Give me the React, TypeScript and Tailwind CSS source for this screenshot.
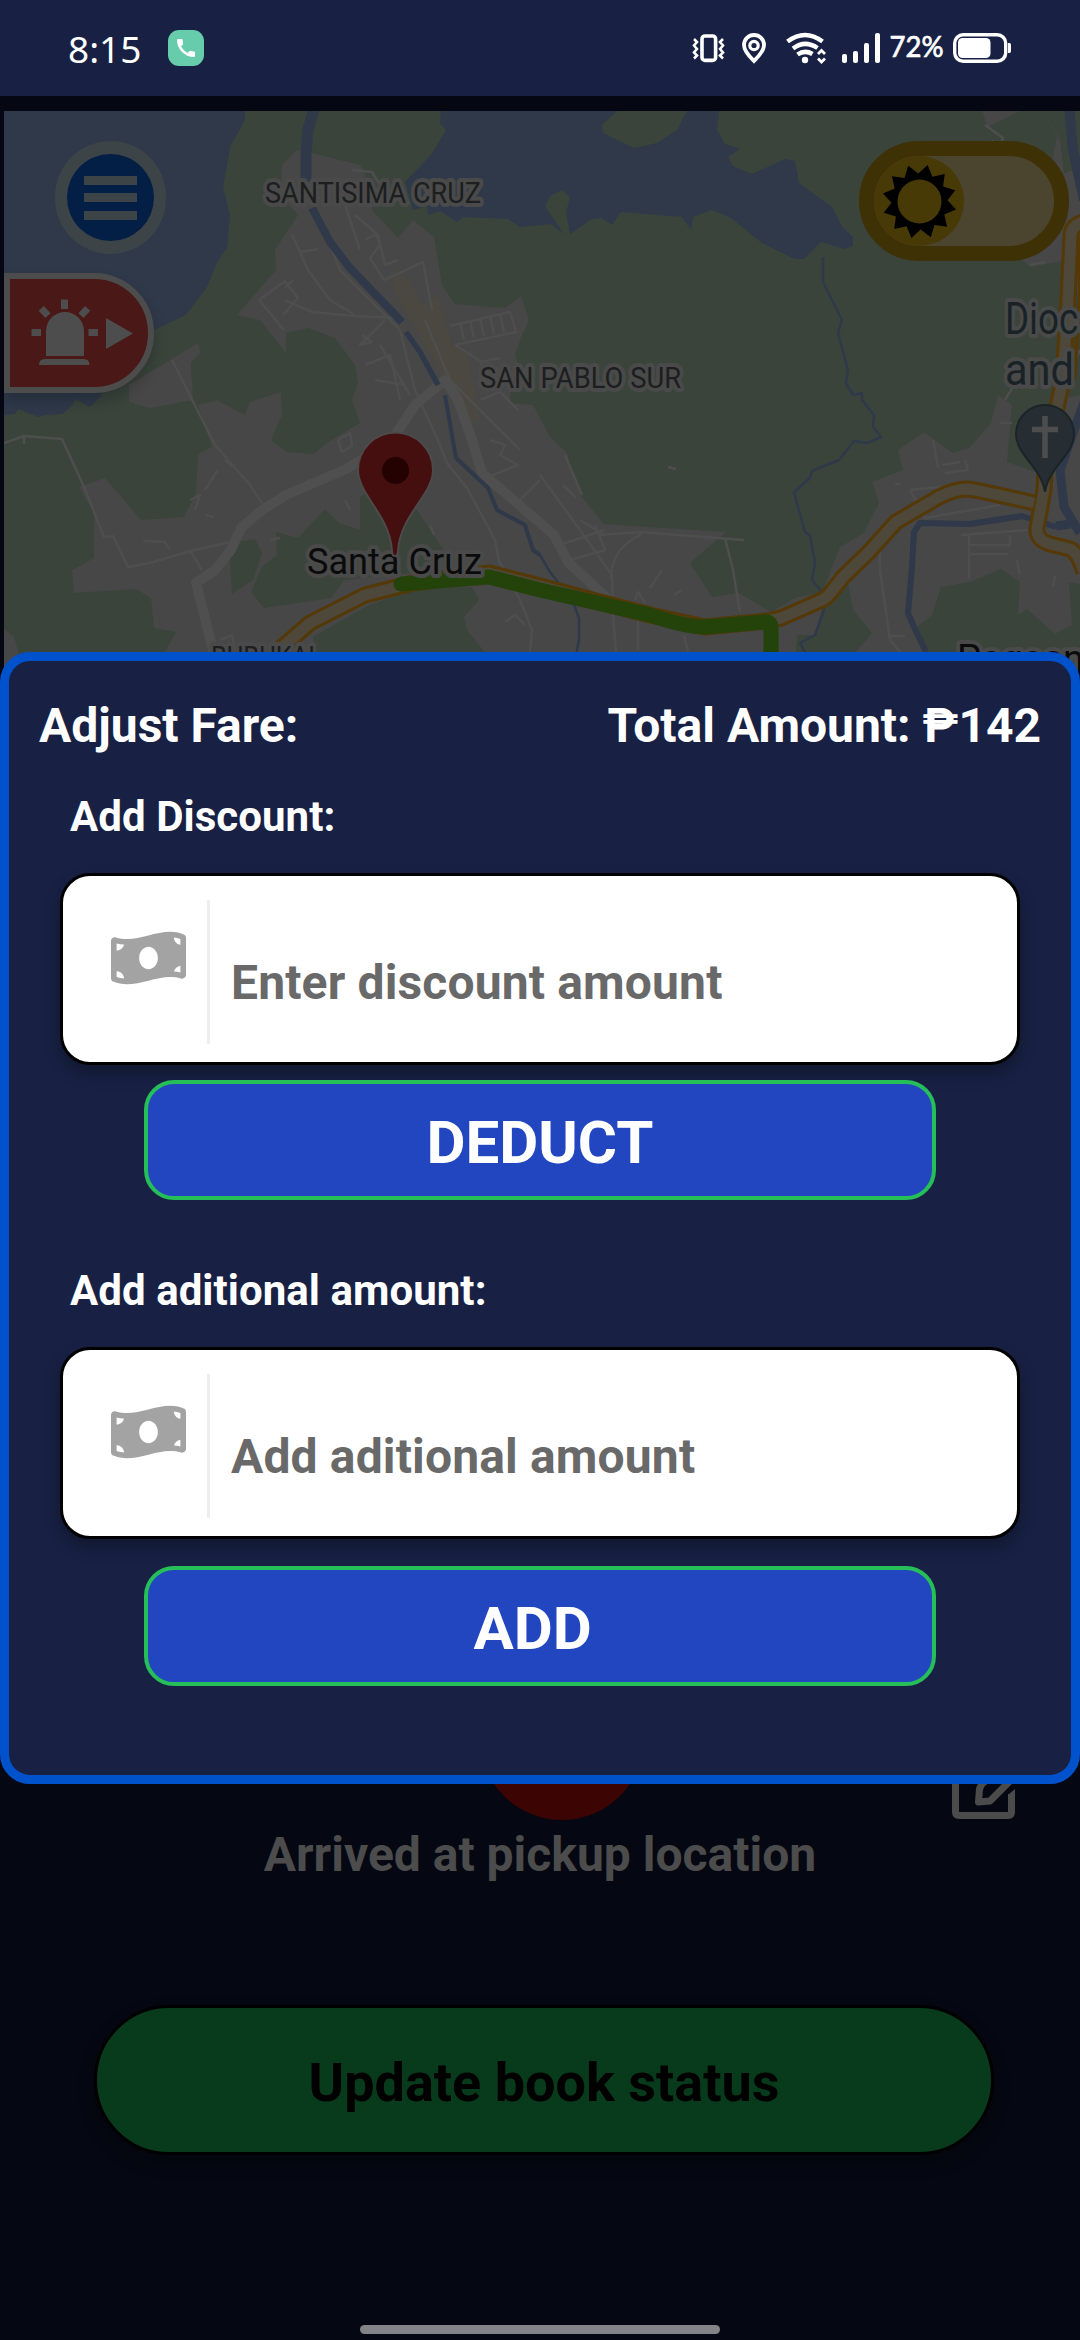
import React from "react";
import { FaMoneyBillWave } from "react-icons/fa";
import { MdCall } from "react-icons/md";

function StatusIcons() {
  return (
    <svg className="h-[96px] w-[330px]" viewBox="690 0 330 96" fill="none">
      <g stroke="#fff" strokeWidth="3.6">
        <rect x="702" y="36" width="13.6" height="24.4" rx="3" />
        <path d="M694 39l3 3-3 3.500 3 3.500-3 3.500 3 3-3 3" strokeWidth="2.600" />
        <path d="M723 39l-3 3 3 3.500-3 3.500 3 3.500-3 3 3 3" strokeWidth="2.600" />
        <path d="M754 61c-3-3-10-9.500-10-16a10 10 0 0 1 20 0c0 6.500-7 13-10 16z" strokeWidth="3.800" />
        <circle cx="754" cy="45.500" r="4.200" strokeWidth="3.200" />
        <path d="M787.500 41.500Q805 28.500 822.500 41.500" strokeWidth="4.500" />
        <path d="M793 48.500Q805 39.500 817.500 48" strokeWidth="4.500" />
        <path d="M797.500 54.500Q805 49.500 812.500 54" strokeWidth="4.500" />
        <path d="M818 54l3.500-3.500 3.500 3.500M818 58.500l3.500 3.500 3.500-3.500" strokeWidth="2.800" />
        <rect x="954.700" y="34.700" width="51" height="26.600" rx="8.500" strokeWidth="3.400" />
      </g>
      <g fill="#fff">
        <circle cx="805" cy="60" r="3.200" />
        <rect x="842" y="54" width="5" height="9" rx="2" />
        <rect x="853" y="51" width="5" height="12" rx="2" />
        <rect x="864" y="43" width="5" height="20" rx="2" />
        <rect x="875" y="33" width="5" height="30" rx="2" />
        <rect x="958" y="38" width="32.500" height="20" rx="4.500" />
        <path d="M1008 43h1.500q1.500 0 1.500 2v6q0 2-1.500 2h-1.500z" />
        <text x="889.500" y="57" fontFamily="Lato" fontSize="28.500" stroke="#fff" strokeWidth="0.700" textLength="54" lengthAdjust="spacingAndGlyphs">72%</text>
      </g>
    </svg>
  );
}

const HIGHWAY =
  "M279 650L310 623L365 595L413 583L489 573L540 586L592 600L650 615L705 627L767 621L781 618L822 600Q828 597 832 591L843 577L868 553L896 522L939 497Q955 489 967 489Q978 490 1034 503";
const HIGHWAY_EAST =
  "M1088 221Q1071 224 1071 236L1068 300L1063 380L1052 430L1045 470L1044 490L1037 528Q1036 540 1050 544L1070 549Q1078 552 1084 572";

function MapView() {
  return (
    <svg className="block h-[560px] w-[1076px]" viewBox="4 111 1076 560" fill="none">
      <rect x="4" y="111" width="1076" height="560" fill="#3a443b" />
      <g fill="#2f394a">
        <path d="M4 111H245V120L230 147L227 165L223 187L230 215L227 248L217 262L207 287L186 315L152 331L120 345L101 396L90 407L75 399L73 405L62 414L45 415L38 417L18 409L15 414L4 415Z" />
        <path d="M441 111L440 123L446 130L431 155L405 182L413 210L427 206L428 215L440 211L457 222L463 217L508 219L520 227L551 224L564 234H570L592 219L602 218L612 225L621 212L682 217L691 230L693 217L712 210L731 218L762 243L795 259H804L821 242L844 249L853 246V237L842 227L832 207L799 183L795 161L785 159L752 174L733 166L728 157L740 149L725 144L717 130L719 111Z" />
      </g>
      <path fill="#3a443b" d="M617 111L602 125L603 133L634 148L657 143L677 130L687 111ZM545 206L550 196L562 190L570 197L566 213L570 234L564 234Z" />
      <g fill="#474747">
        <path d="M282 165L297 150L320 155L360 165L375 195L372 210L398 238L413 220L434 237L442 285L455 304L505 308L521 296L529 320L520 340L515 355L520 372L510 385V403L533 405L540 418L550 437L567 453L573 477L582 497L604 524L726 532L690 563L712 597L739 593L771 612L797 597L822 593L840 547L864 533L879 503L872 482L903 470L898 450L924 432L953 453L969 448L991 423L998 395L1012 405L1007 462L1036 472L1056 400L1080 395V584L1069 582L1072 625L1055 634L1027 609L1018 615L1020 582L1001 569L970 582L941 587L932 615L918 626L926 671H856V652L872 633L853 610L848 583L824 600L815 635H797L795 671H160L165 652L176 632L154 628L151 598L136 589L74 593L72 570L94 558V513L79 487L105 478L141 520L184 517L196 493L198 454L212 447L198 405L217 400L245 415L250 402L281 392L282 415L271 440L287 452L314 454L328 442L360 423L352 400L358 383L355 365L335 338L308 328L286 333V353L260 320L237 315L276 270L275 250L298 215L280 195Z" />
        <path d="M129 385L198 343L201 352L191 363L193 400L150 408L129 402ZM4 629L14 637L24 671H4ZM982 111L988 127L1019 111ZM1043 111L1057 137L1053 157L1060 175L1072 170L1080 200V300L1066 260L1031 267L1022 260L1050 235L1066 190L1060 140Z" />
      </g>
      <g fill="#3a443b">
        <path d="M325 509L339 523L360 530V497L385 480L417 510L448 557L413 573L344 580L331 598L264 608L251 592L262 567L277 555L276 532L298 538Z" />
        <path d="M255 539L262 553L253 580L232 594L230 560L238 542ZM313 637L365 607L410 590L472 587L479 600L464 617L467 630L500 671H317Z" />
      </g>
      <path fill="#4a4840" d="M398 268L412 285L422 305L438 295L452 345L468 355L480 420L470 425L455 400L440 370L410 320L392 285Z" />

      {/* local streets */}
      <g stroke="#4e4e4e" strokeWidth="2.500" strokeLinejoin="round">
        <path d="M4 443L24 436L62 439L85 489L104 537L113 536L128 567L150 563L190 551L240 540M172 360L215 445L250 485L262 503M24 436V444M190 551L202 570" />
        <path d="M292 235L300 252L318 249M300 252L308 270L330 300L355 315M318 215L340 270L370 300L400 330M352 170L372 172L380 185M345 205L360 250M355 215L378 235L385 265L398 260M365 240L376 234L380 245L370 258M370 258L384 280L423 262L432 310" />
        <path d="M259 300L285 281L298 298L283 315M259 300L284 330M293 280L285 287M285 300L312 312L355 316L400 318M385 320L360 345L372 342L362 335M365 365L390 355L400 400M375 380L405 385M380 345L410 395" />
        <path d="M450 326L510 312L516 332L455 345M460 322L464 340M470 320L474 338M480 318L484 336M490 316L494 334M500 314L504 332M455 345L482 362L500 358M482 362L480 372M400 330L415 390L440 445L447 463L467 488L495 540L500 566M425 320L450 380L500 430L520 450M480 400L500 392L518 410M490 440L505 445L500 455L518 465L480 480M520 500L540 480" />
        <path d="M540 475L580 530L612 575L613 615L616 652M565 455L582 495M604 530L560 545M600 535L640 532L640 537M640 532L744 540M725 538L733 570L740 612M640 535Q610 550 611 580M570 560L605 550L595 525M576 498L563 485M580 520L604 535M638 620V650M684 635L688 652" />
        <path d="M500 562L520 600L532 630L530 652M505 622L515 615L525 625M910 490L925 518L1000 505M910 490L960 485M933 440L938 468M942 465L960 462M945 473L968 470L965 460M879 530L880 570L890 640L900 652M888 636H905M961 535L1028 530M969 535V578M969 545H1010V535M969 554H1008M1060 390L1080 350M1005 400L1020 375" />
        <path d="M190 500L200 495L195 510M205 490L218 470M205 515L214 517M143 541L165 542L170 550M225 460L232 466M338 440L350 433L352 446L342 452ZM345 500L350 510M430 525L434 535M270 540L280 538M1000 423H1012M895 485L900 483M668 467L676 469M635 600L638 592L645 603M650 588L662 570M674 595L682 590M1017 560L1020 575M1055 576L1053 586M220 640L232 635L235 650M985 125L1003 138L998 150M993 140L988 150M1030 265L1045 262" />
      </g>
      <path stroke="#4f4f4f" strokeWidth="10" strokeLinejoin="round" d="M213 671V650L196 583L215 570L231 550L241 528L262 510L286 495L344 470L390 443L415 405L445 380L458 400L472 440L482 473L540 523L554 535L568 562L609 600" />

      {/* rivers and canals */}
      <g stroke="#2f394a" strokeLinejoin="round">
        <path strokeWidth="11" d="M315 105L308 130L306 155L306 182" />
        <path strokeWidth="8" d="M312 208L330 242L350 268L402 322" />
        <path strokeWidth="5.500" d="M406 332L420 352L438 385" />
        <path strokeWidth="4" d="M445 395L456 458L488 488L497 510L525 525L533 550L540 555" />
        <path strokeWidth="2.500" d="M540 555L550 572L572 600L579 618L579 640L575 660M823 257V282L842 320L838 333L848 370L846 383L853 395L862 393V400L874 415L873 427L881 437L867 443L854 441L839 460L812 471L810 478L794 492L805 532L810 535L815 563L812 580L826 597L824 610L815 635L800 643L807 656" />
        <path strokeWidth="6" d="M926 652L914 627L908 613L912 567L914 532L920 523L970 524L1022 516L1056 527" />
        <path strokeWidth="9" d="M1085 400L1074 430L1060 470L1064 507L1080 533M1056 526L1070 524" />
        <path strokeWidth="10" d="M1069 105L1073 150L1084 200" />
      </g>

      {/* highways */}
      <g strokeLinejoin="round">
        <path d={HIGHWAY_EAST} stroke="#543806" strokeWidth="17" />
        <path d={HIGHWAY} stroke="#543806" strokeWidth="17" />
        <path d={HIGHWAY_EAST} stroke="#4d4839" strokeWidth="11" />
        <path d={HIGHWAY} stroke="#4d4839" strokeWidth="11" />
        <path d="M1080 237V300L1074 380" stroke="#543806" strokeWidth="4" />
      </g>
      <path d="M401 584L489 577L540 590L650 615Q685 627 705 627L764 622Q771 621 771 628V671" stroke="#24430b" strokeWidth="15" strokeLinecap="round" strokeLinejoin="round" />

      {/* place names */}
      <g fontFamily="Roboto, sans-serif" stroke="#494a49" strokeWidth="8" strokeLinejoin="round" paintOrder="stroke">
        <g fill="#1d1e1f" fontSize="29">
          <text x="265" y="202.500" textLength="216" lengthAdjust="spacingAndGlyphs">SANTISIMA CRUZ</text>
          <text x="480" y="388" textLength="201" lengthAdjust="spacingAndGlyphs">SAN PABLO SUR</text>
          <text x="211" y="667" textLength="111" lengthAdjust="spacingAndGlyphs">BUBUKAL</text>
        </g>
        <g fill="#0b0b0b" fontSize="37.500">
          <text x="307" y="574" textLength="175" lengthAdjust="spacingAndGlyphs">Santa Cruz</text>
          <text x="957" y="672" fontSize="38">Pagsanjan</text>
        </g>
        <g fill="#192226" fontSize="44">
          <text x="1005" y="334" textLength="152" lengthAdjust="spacingAndGlyphs">Diocesan</text>
          <text x="1005" y="385" textLength="69" lengthAdjust="spacingAndGlyphs">and</text>
        </g>
      </g>

      {/* map pins */}
      <path d="M1045 492C1042 468 1016 455 1016 434A29 29 0 0 1 1074 434C1074 455 1048 468 1045 492Z" fill="#262e33" stroke="#1b2427" strokeWidth="2" />
      <path d="M1045 416V458M1032 429.500H1058" stroke="#4d4d4d" strokeWidth="5.500" />
      <path d="M395 556Q392 556 392 551C390 515 358 495 358 470A37.500 37.500 0 0 1 433 470C433 495 400 515 398 551Q398 556 395 556Z" fill="#450f10" stroke="#4d4a4a" strokeWidth="2" />
      <circle cx="395.500" cy="470.500" r="13.500" fill="#250202" />
    </svg>
  );
}

function MenuButton() {
  return (
    <div className="absolute left-[51px] top-[30px] flex h-[113px] w-[111px] items-center justify-center rounded-full bg-[#3d4447]">
      <div className="flex size-[87px] flex-col items-center justify-center gap-[8.500px] rounded-full bg-[#041f46]">
        <div className="h-[9px] w-[53px] bg-[#3d4447]" />
        <div className="h-[9px] w-[53px] bg-[#3d4447]" />
        <div className="h-[9px] w-[53px] bg-[#3d4447]" />
      </div>
    </div>
  );
}

function SirenButton() {
  return (
    <div className="absolute left-0 top-[162px] h-[120px] w-[150px] rounded-r-full border-6 border-[#4c4c4c] bg-[#491817] shadow-[0_8px_14px_rgba(0,0,0,0.2)]">
      <svg className="h-[108px] w-[138px]" viewBox="10 279 138 108" fill="#4d4d4d">
        <path d="M46 356V331a19 19 0 0 1 38 0V356ZM39 365q0-6 6-6H83.500q6 0 6 6ZM61 299.500h7v9.500h-7ZM31.500 329h9.500v7h-9.500ZM88.500 329h9.500v7h-9.500ZM106 318L133 333.500L106 349Z" />
        <rect x="39.600" y="308.500" width="10" height="7" transform="rotate(48 44.600 312)" />
        <rect x="79.300" y="308.500" width="10" height="7" transform="rotate(-48 84.300 312)" />
      </svg>
    </div>
  );
}

function sunPoints() {
  return Array.from({ length: 24 }, (_, i) => {
    const r = i % 2 ? 28 : 37.5;
    const a = ((i * 15 - 77.5) * Math.PI) / 180;
    return `${(45.5 + r * Math.cos(a)).toFixed(1)},${(45.5 + r * Math.sin(a)).toFixed(1)}`;
  }).join(" ");
}

function ThemeToggle() {
  return (
    <div className="absolute right-[11px] top-[30px] h-[120px] w-[210px] rounded-full border-15 border-[#3f3106] bg-[#4b4530]">
      <svg className="size-[90px]" viewBox="0 0 90 90">
        <circle cx="45" cy="45" r="45" fill="#483a07" />
        <polygon points={sunPoints()} fill="#000" />
        <circle cx="45.500" cy="45.500" r="22" fill="#483a07" />
      </svg>
    </div>
  );
}

function AmountField({ placeholder }: { placeholder: string }) {
  return (
    <div className="mx-[51px] flex h-[192px] rounded-[30px] border-3 border-black bg-white pt-6 pb-[18px] shadow-[0_8px_16px_rgba(0,0,0,0.3)]">
      <div className="flex w-[147px] items-start justify-end border-r-3 border-[#eee] pr-[21px] pt-7">
        <FaMoneyBillWave className="h-[60px] w-[75px] text-[#a3a3a3]" />
      </div>
      <input
        className="ml-[21px] mt-[22px] min-w-0 flex-1 bg-transparent text-[48px] font-bold tracking-[0.150px] outline-none placeholder:text-[#696969] placeholder:opacity-100"
        placeholder={placeholder}
      />
    </div>
  );
}

function ActionButton({ label }: { label: string }) {
  return (
    <button className="mx-auto block h-[120px] w-[792px] rounded-[30px] border-4 border-[#26be58] bg-[#2246c0] pt-[5px] text-[60px] leading-[107px] font-bold whitespace-pre">
      {label}
    </button>
  );
}

function FareDialog() {
  return (
    <section className="absolute inset-x-0 top-[652px] h-[1132px] rounded-[30px] border-9 border-[#0052cc] bg-[#182144] text-white">
      <header className="flex justify-between px-[30px] pt-[37px] text-[48px] leading-[56px] font-bold">
        <h1>Adjust Fare:</h1>
        <p>Total Amount: ₱142</p>
      </header>
      <h2 className="mt-[38px] pl-[61px] text-[42px] leading-[50px] font-bold tracking-[0.050px]">Add Discount:</h2>
      <div className="mt-[31px]">
        <AmountField placeholder="Enter discount amount" />
      </div>
      <div className="mt-[15px]">
        <ActionButton label="DEDUCT" />
      </div>
      <h2 className="mt-[66px] pl-[61px] text-[42px] leading-[50px] font-bold tracking-[0.050px]">Add aditional amount:</h2>
      <div className="mt-[31px]">
        <AmountField placeholder="Add aditional amount" />
      </div>
      <div className="mt-[27px]">
        <ActionButton label="ADD " />
      </div>
    </section>
  );
}

export default function App() {
  return (
    <main className="relative flex h-[2340px] w-[1080px] flex-col overflow-hidden bg-[#050812] font-['Roboto',sans-serif]">
      <div className="flex h-[96px] shrink-0 items-center bg-[#182144] pl-[68px] pr-[60px] text-white">
        <span className="w-[75px] font-['Noto_Sans',sans-serif] text-[37px] leading-none">8:15</span>
        <span className="ml-[25px] flex size-[36px] items-center justify-center rounded-[11px] bg-[#66ccab]">
          <MdCall className="size-6" />
        </span>
        <div className="ml-auto">
          <StatusIcons />
        </div>
      </div>

      <div className="relative mt-[15px] ml-1 h-[560px] shrink-0">
        <MapView />
        <MenuButton />
        <SirenButton />
        <ThemeToggle />
      </div>

      <div className="flex flex-1 flex-col items-center pt-[985px]">
        <div className="grid w-full grid-cols-[1fr_164px_1fr] items-end pl-[44px]">
          <div />
          <div className="size-[164px] rounded-full bg-[#3d0404]" />
          <svg className="mr-[62px] size-[68px] justify-self-end" viewBox="0 0 68 68" fill="none" stroke="#4b4b4b" strokeWidth="7">
            <path d="M30 8H9q-3.500 0-3.500 3.500V60q0 3.500 3.500 3.500H58q3.500 0 3.500-3.500V42" />
            <path d="M58 43L65 37V43Z" fill="#4b4b4b" stroke="none" />
            <path d="M58 9L31.500 32.500L29.500 37L28.500 50L40 49L66 23" strokeLinejoin="round" />
          </svg>
        </div>
        <p className="mt-[7px] text-[48px] leading-[56px] font-bold text-[#4c4c4c]">Arrived at pickup location</p>
        <button className="mt-[122px] ml-[8px] h-[150px] w-[900px] rounded-full border-3 border-black bg-[#083b1b] pt-1 text-[54px] font-bold shadow-[0_8px_16px_rgba(0,0,0,0.3)]">
          Update book status
        </button>
        <div className="mt-auto mb-[6px] h-[9px] w-[360px] rounded-full bg-[#838388]" />
      </div>

      <FareDialog />
    </main>
  );
}
